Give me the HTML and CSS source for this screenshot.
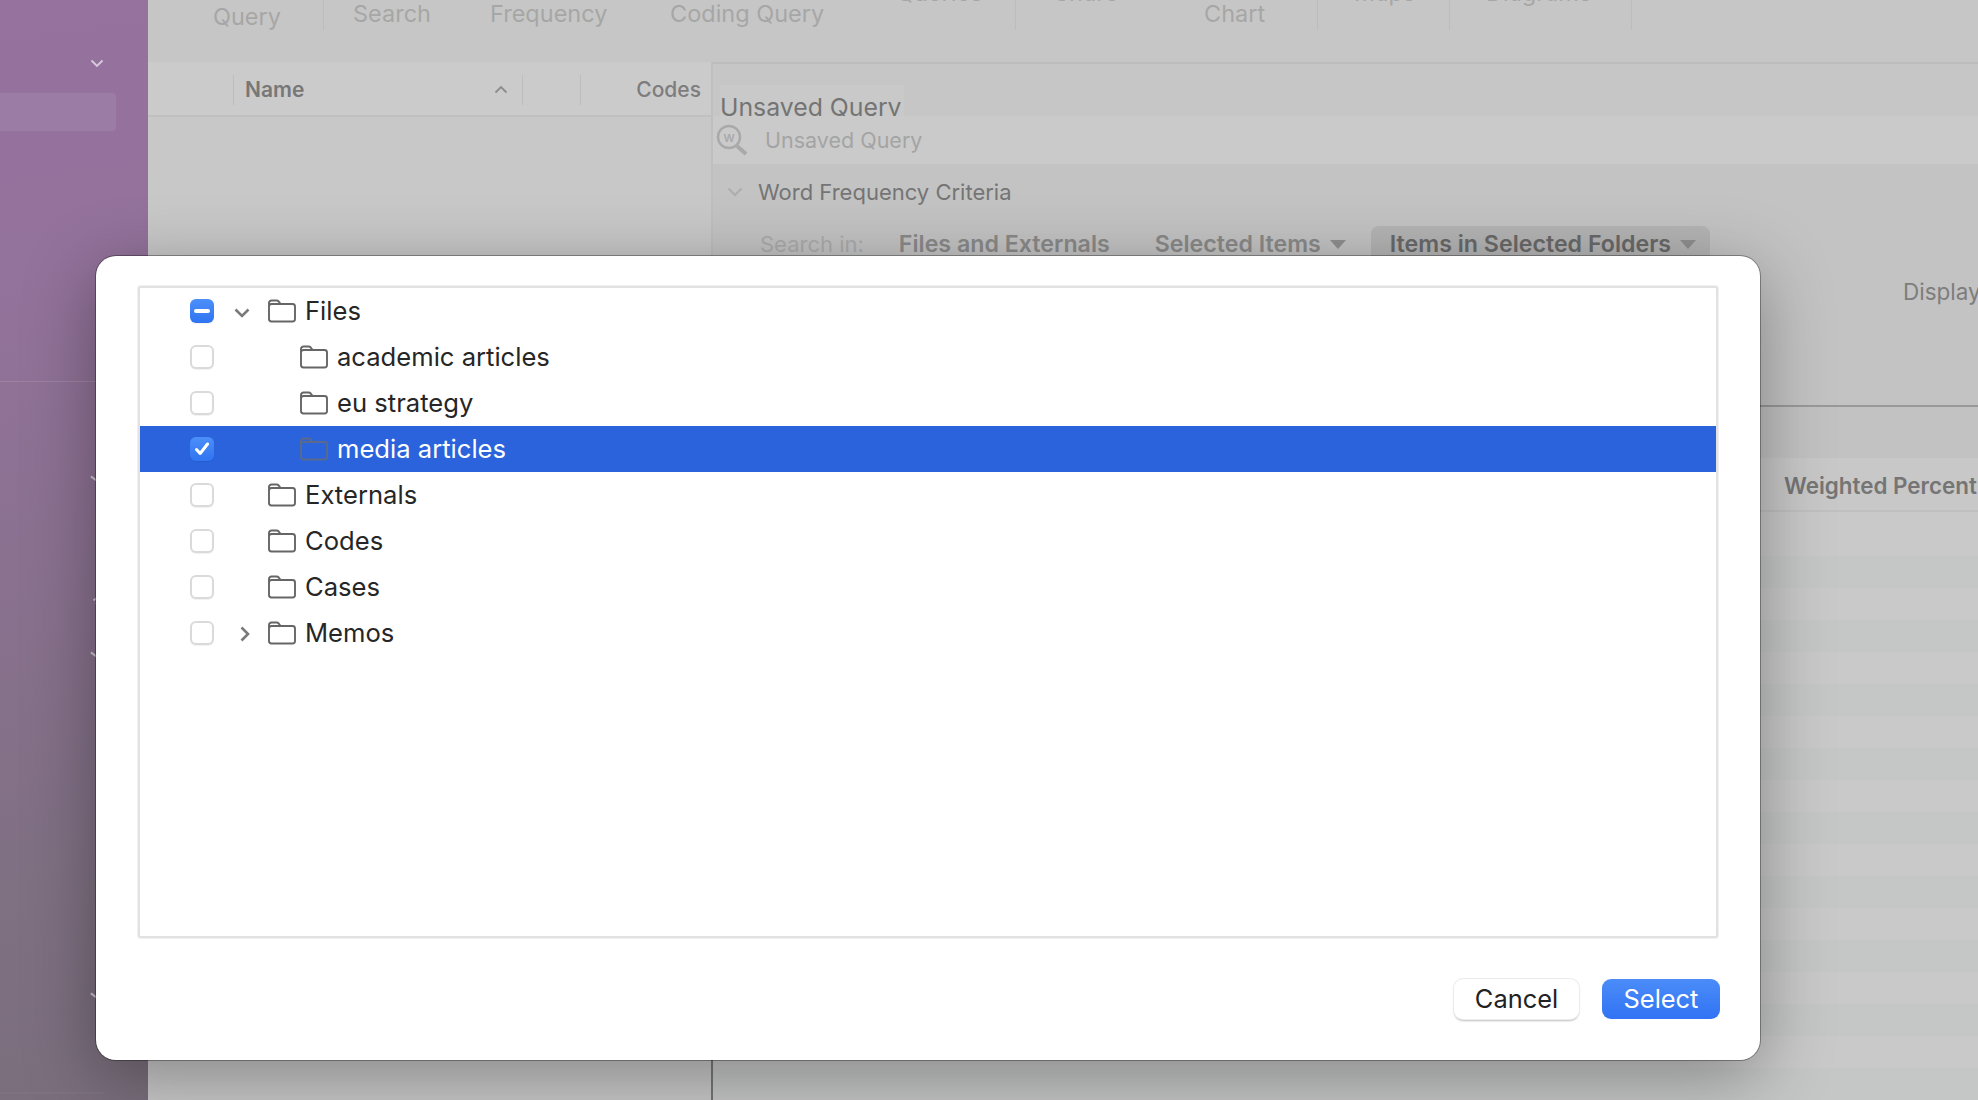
FILE: index.html
```
<!DOCTYPE html>
<html lang="en">
<head>
<meta charset="utf-8">
<title>Select folders</title>
<link rel="stylesheet" href="styles.css">
</head>
<body>
<svg class="defs" width="0" height="0" aria-hidden="true">
  <symbol id="folder" viewBox="0 0 28 24">
    <path d="M1 8V4a2.5 2.5 0 0 1 2.5-2.5h5.2c.8 0 1.4.3 1.9.9L12.6 5H24.5A2.5 2.5 0 0 1 27 7.500V20a2.500 2.500 0 0 1-2.500 2.500H3.500A2.500 2.500 0 0 1 1 20V8M1 7.500c0-1.500 1-2.500 2.500-2.500h9" fill="none" stroke="currentColor" stroke-width="1.900" stroke-linejoin="round"/>
  </symbol>
</svg>

<div class="app">
  <aside class="sidebar">
    <svg class="side-chev first" width="14" height="9" viewBox="0 0 14 9"><path d="M1.500 1.500 7 7l5.500-5.500" /></svg>
    <div class="side-selected"></div>
    <div class="side-line"></div>
    <div class="side-line last"></div>
  </aside>

  <main class="main">
    <nav class="tabs">
      <span class="tab t-query">Query</span>
      <i class="tab-div d1"></i>
      <span class="tab t-search">Search</span>
      <span class="tab t-freq">Frequency</span>
      <span class="tab t-coding">Coding Query</span>
      <span class="tab t-queries">Queries</span>
      <i class="tab-div d2"></i>
      <span class="tab t-share">Share</span>
      <span class="tab t-chart">Chart</span>
      <i class="tab-div d3"></i>
      <span class="tab t-maps">Maps</span>
      <i class="tab-div d4"></i>
      <span class="tab t-diagrams">Diagrams</span>
      <i class="tab-div d5"></i>
    </nav>

    <div class="workspace">
      <section class="list-panel">
        <header class="list-head">
          <i class="head-div"></i>
          <span class="head-name">Name</span>
          <svg class="head-sort" width="14" height="9" viewBox="0 0 14 9"><path d="M1.500 7.500 7 2l5.500 5.500"/></svg>
          <i class="head-div"></i>
          <i class="head-div gap"></i>
          <span class="head-codes">Codes</span>
        </header>
      </section>

      <section class="query-panel">
        <div class="query-title-bar"><span class="query-title">Unsaved Query</span></div>
        <div class="query-name-row">
          <svg class="query-icon" width="34" height="32" viewBox="0 0 34 32">
            <circle cx="13" cy="13" r="11" fill="none" stroke="#a9a9a9" stroke-width="2.500"/>
            <path d="M21 22l9 8" stroke="#a9a9a9" stroke-width="4" fill="none"/>
            <text x="13" y="17.500" text-anchor="middle" class="query-w">W</text>
          </svg>
          <span class="query-name">Unsaved Query</span>
        </div>
        <div class="criteria">
          <div class="criteria-head">
            <svg class="crit-chev" width="16" height="10" viewBox="0 0 16 10"><path d="M1.500 1.500 8 8l6.500-6.500"/></svg>
            <span>Word Frequency Criteria</span>
          </div>
          <div class="search-in">
            <span class="si-label">Search in:</span>
            <span class="si-opt">Files and Externals</span>
            <span class="si-opt with-tri">Selected Items<i class="tri"></i></span>
            <span class="si-opt pill with-tri">Items in Selected Folders<i class="tri"></i></span>
          </div>
          <div class="display">Display</div>
        </div>
        <div class="results-gap"></div>
        <div class="results-head"><span>Weighted Percent</span></div>
        <div class="results"><div class="stripes"></div></div>
      </section>
    </div>
  </main>
</div>

<div class="side-marks">
  <span class="mark m1"></span><span class="mark m2"></span><span class="mark m3"></span><span class="mark m4"></span>
</div>

<div class="dialog" role="dialog">
  <div class="tree">
    <div class="row">
      <span class="check mixed"><i></i></span>
      <svg class="disclosure" width="16" height="10" viewBox="0 0 16 10"><path d="M1.500 1.500 8 8l6.500-6.500"/></svg>
      <svg class="folder"><use href="#folder"/></svg>
      <span class="label">Files</span>
    </div>
    <div class="row child">
      <span class="check"></span>
      <svg class="folder"><use href="#folder"/></svg>
      <span class="label">academic articles</span>
    </div>
    <div class="row child">
      <span class="check"></span>
      <svg class="folder"><use href="#folder"/></svg>
      <span class="label">eu strategy</span>
    </div>
    <div class="row child selected">
      <span class="check on"><svg width="16" height="14" viewBox="0 0 16 14"><path d="M2.500 7.500 6.200 11.500 13.500 2"/></svg></span>
      <svg class="folder"><use href="#folder"/></svg>
      <span class="label">media articles</span>
    </div>
    <div class="row">
      <span class="check"></span>
      <svg class="folder"><use href="#folder"/></svg>
      <span class="label">Externals</span>
    </div>
    <div class="row">
      <span class="check"></span>
      <svg class="folder"><use href="#folder"/></svg>
      <span class="label">Codes</span>
    </div>
    <div class="row">
      <span class="check"></span>
      <svg class="folder"><use href="#folder"/></svg>
      <span class="label">Cases</span>
    </div>
    <div class="row">
      <span class="check"></span>
      <svg class="disclosure closed" width="10" height="16" viewBox="0 0 10 16"><path d="M1.500 1.500 8 8l-6.500 6.500"/></svg>
      <svg class="folder"><use href="#folder"/></svg>
      <span class="label">Memos</span>
    </div>
  </div>
  <div class="actions">
    <button class="btn cancel" type="button">Cancel</button>
    <button class="btn select" type="button">Select</button>
  </div>
</div>
</body>
</html>
```

FILE: styles.css
```
* { box-sizing: border-box; }
html, body { margin: 0; height: 100%; overflow: hidden; }
body {
  position: relative;
  font-family: Inter, "Liberation Sans", sans-serif;
  background: #c6c6c6;
  color: #222;
}
.defs { position: absolute; }

.app {
  display: grid;
  grid-template-columns: 148px 1fr;
  height: 1100px;
}

/* sidebar */
.sidebar {
  position: relative;
  background: linear-gradient(172deg, #96729f 0%, #93729b 25%, #8a7190 50%, #7f7082 80%, #7a6e7c 100%);
  padding-top: 59px;
}
.side-chev { display: block; margin-left: 90px; }
.side-chev path { fill: none; stroke: #d8cadb; stroke-width: 1.800; }
.side-selected {
  width: 116px;
  height: 38px;
  margin-top: 25px;
  background: #9b7ca4;
  border-radius: 0 3px 3px 0;
}
.side-line {
  width: 96px;
  height: 1px;
  margin-top: 250px;
  background: #9c83a2;
}
.side-line.last {
  width: 104px;
  margin-top: 710px;
  background: #7e7282;
  height: 2px;
}

/* tabs */
.main { display: flex; flex-direction: column; min-width: 0; }
.tabs {
  position: relative;
  height: 62px;
  flex: none;
  overflow: hidden;
  color: #a6a6a6;
  font-size: 23.500px;
}
.tab { position: absolute; white-space: nowrap; line-height: 28px; }
.t-query { left: 65px; top: 3px; }
.t-search { left: 205px; top: 0; }
.t-freq { left: 342px; top: 0; }
.t-coding { left: 522px; top: 0; }
.t-queries { left: 748px; top: -21px; }
.t-share { left: 906px; top: -21px; }
.t-chart { left: 1056px; top: 0; }
.t-maps { left: 1206px; top: -21px; }
.t-diagrams { left: 1338px; top: -21px; }
.tab-div { position: absolute; top: 0; width: 1px; height: 30px; background: #bcbcbc; }
.d1 { left: 175px; }
.d2 { left: 867px; }
.d3 { left: 1169px; }
.d4 { left: 1301px; }
.d5 { left: 1483px; }

/* workspace */
.workspace { display: flex; flex: 1; min-height: 0; }
.list-panel {
  width: 565px;
  flex: none;
  border-right: 2px solid;
  border-image: linear-gradient(#bfbfbf 0 20%, #757575 100%) 1;
  background: #c8c8c8;
}
.list-head {
  display: flex;
  align-items: center;
  height: 55px;
  padding: 2px 0 0 85px;
  background: #cbcbcb;
  border-bottom: 2px solid #c0c0c0;
}
.head-div { width: 1px; height: 30px; background: #bdbdbd; flex: none; }
.head-div.gap { margin-left: 57px; }
.head-name { margin-left: 11px; font-size: 21px; font-weight: 600; color: #777; }
.head-sort { margin-left: 190px; margin-right: 14px; flex: none; }
.head-sort path { fill: none; stroke: #8c8c8c; stroke-width: 1.800; }
.head-codes { margin-left: auto; margin-right: 10px; font-size: 21px; font-weight: 500; color: #7d7d7d; }

.query-panel { flex: 1; min-width: 0; display: flex; flex-direction: column; }
.query-title-bar {
  height: 54px;
  flex: none;
  border-top: 2px solid #bdbdbd;
  padding: 21px 0 0 7px;
  overflow: hidden;
}
.query-title {
  display: block;
  width: 184px;
  height: 31px;
  overflow: hidden;
  background: #c9c9c9;
  color: #747474;
  font-size: 24.800px;
  line-height: 44px;
  white-space: nowrap;
}
.query-name-row {
  display: flex;
  align-items: center;
  gap: 15px;
  height: 48px;
  padding-left: 3px;
  background: #cacaca;
  flex: none;
}
.query-icon { flex: none; }
.query-w { font-size: 11px; font-weight: 600; fill: #a9a9a9; font-family: Inter, sans-serif; }
.query-name { font-size: 21.500px; color: #a4a4a4; }
.criteria { position: relative; height: 243px; flex: none; background: #c3c3c3; border-bottom: 2px solid #999; }
.criteria-head {
  display: flex;
  align-items: center;
  gap: 15px;
  padding: 14px 0 0 14px;
  font-size: 22px;
  color: #757575;
  line-height: 28px;
}
.crit-chev path { fill: none; stroke: #adadad; stroke-width: 2; }
.search-in {
  display: flex;
  align-items: center;
  height: 30px;
  margin-top: 23px;
  padding-left: 47px;
  font-size: 22px;
}
.si-label { color: #acacac; margin-right: 35px; }
.si-opt { color: #8a8a8a; font-size: 23.200px; font-weight: 600; margin-right: 45px; white-space: nowrap; display: flex; align-items: center; }
.si-opt.pill {
  height: 38px;
  margin: 2px 0 0 -20px;
  padding: 0 14px 2px 19px;
  background: #b4b4b4;
  color: #696969;
  border-radius: 8px;
}
.tri {
  width: 0;
  height: 0;
  margin-left: 9px;
  border-left: 8px solid transparent;
  border-right: 8px solid transparent;
  border-top: 9px solid #8f8f8f;
}
.display { position: absolute; left: 1190px; top: 114px; font-size: 22.500px; color: #7d7d7d; white-space: nowrap; }
.results-gap { height: 51px; flex: none; background: #c2c2c2; }
.results-head {
  height: 54px;
  flex: none;
  padding-left: 1071px;
  background: #c8c8c8;
  border-bottom: 2px solid #c0c0c0;
  color: #757575;
  font-size: 22.400px;
  font-weight: 600;
  line-height: 56px;
  white-space: nowrap;
  overflow: hidden;
}
.results { flex: 1; min-height: 0; background: #c9c9c9; padding-top: 44px; overflow: hidden; }
.stripes {
  height: 100%;
  background: repeating-linear-gradient(#c5c7c6 0 32px, #c9c9c9 32px 64px);
}

/* sidebar chevrons peeking out from behind the dialog */
.side-marks { position: absolute; inset: 0; pointer-events: none; }
.mark { position: absolute; left: 90px; width: 9px; height: 2px; background: #cfc6d0; transform: rotate(35deg); }
.m1 { top: 478px; }
.m2 { top: 598px; left: 93px; width: 5px; transform: rotate(-35deg); box-shadow: 0 4px 0 #cfc6d0; }
.m3 { top: 654px; }
.m4 { top: 995px; }

/* dialog */
.dialog {
  position: absolute;
  left: 96px;
  top: 256px;
  width: 1664px;
  height: 804px;
  padding: 29px 41px 0;
  background: #fff;
  border-radius: 20px;
  box-shadow: 0 0 0 1px rgba(0, 0, 0, .32), 0 16px 70px rgba(0, 0, 0, .34);
  display: flex;
  flex-direction: column;
}
.tree {
  height: 652px;
  flex: none;
  margin: 1px;
  background: #fff;
  border: 2px solid #e2e2e2;
  border-radius: 3px;
  box-shadow: 0 0 0 1px #f0f0f0;
}
.row {
  position: relative;
  display: flex;
  align-items: center;
  height: 46px;
  padding-left: 50px;
  font-size: 25.600px;
  color: #262626;
}
.check {
  width: 24px;
  height: 24px;
  flex: none;
  display: flex;
  align-items: center;
  justify-content: center;
  border: 2px solid #dadada;
  border-radius: 6px;
  background: #fff;
  box-shadow: 0 1px 1px rgba(0, 0, 0, .06);
}
.check.mixed, .check.on {
  border: 0;
  background: linear-gradient(#4c8ffa, #2f74f1);
}
.check.mixed i { width: 16px; height: 4px; border-radius: 2px; background: #fff; }
.check svg path { fill: none; stroke: #fff; stroke-width: 3; stroke-linecap: round; stroke-linejoin: round; }
.disclosure { position: absolute; left: 94px; top: 20px; }
.disclosure.closed { left: 100px; top: 16px; }
.disclosure path { fill: none; stroke: #7a7a7a; stroke-width: 2.600; }
.folder { width: 28px; height: 24px; margin-left: 54px; flex: none; color: #666; }
.row.child .folder { margin-left: 86px; }
.label { margin-left: 9px; margin-bottom: 2px; white-space: nowrap; }
.row.selected { background: #2a63db; color: #fff; }
.row.selected .folder { color: #5b6a8c; }
.actions {
  display: flex;
  justify-content: flex-end;
  gap: 23px;
  margin-right: -1px;
  padding-top: 40px;
}
.btn {
  height: 40px;
  padding: 0;
  border-radius: 9px;
  font: 400 25.400px/40px Inter, "Liberation Sans", sans-serif;
  border: 0;
}
.btn.cancel {
  width: 125px;
  background: #fff;
  color: #222;
  box-shadow: 0 0 0 1px #ececec, 0 1.500px 2px rgba(0, 0, 0, .25);
}
.btn.select {
  width: 118px;
  background: linear-gradient(#4b8cf9, #3173f3);
  color: #fff;
}
```
